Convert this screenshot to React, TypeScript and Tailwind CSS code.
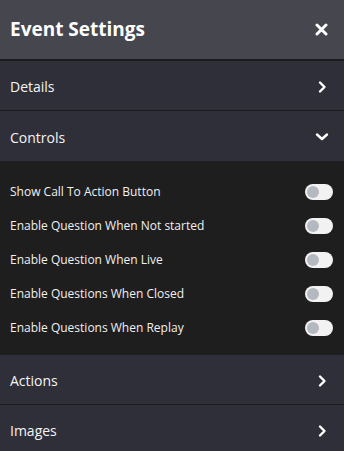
import React from "react";

const Chevron = ({ down = false }: { down?: boolean }) => (
  <svg width="14" height="14" viewBox="0 0 14 14" fill="none" stroke="#ffffff" strokeWidth="2.4" strokeLinecap="round" strokeLinejoin="round">
    {down ? <path d="M2 4.5l5 4.5 5-4.5" /> : <path d="M5 2.5l4.5 4.5L5 11.5" />}
  </svg>
);

const Toggle = () => (
  <div className="w-[28px] h-[16px] rounded-full bg-[#f2f2f2] flex items-center px-[2px]">
    <div className="w-[12px] h-[12px] rounded-full bg-[#b4b8c0]" />
  </div>
);

const Row = ({ label, open = false, border = true }: { label: string; open?: boolean; border?: boolean }) => (
  <div className={`h-[50px] shrink-0 bg-[#2f2f39] flex items-center justify-between pl-[10px] pr-[15px] pt-[2px] ${border ? "border-b border-[#1c1c20]" : ""}`}>
    <span className="text-[14px] text-[#f4f4f4]">{label}</span>
    <Chevron down={open} />
  </div>
);

const items = [
  "Show Call To Action Button",
  "Enable Question When Not started",
  "Enable Question When Live",
  "Enable Questions When Closed",
  "Enable Questions When Replay",
];

export default function App() {
  return (
    <div className="w-[344px] h-[451px] overflow-hidden bg-[#2f2f39] flex flex-col" style={{ fontFamily: '"Open Sans", "Noto Sans", sans-serif' }}>
      <div className="h-[61px] shrink-0 bg-[#46464e] flex items-center justify-between pl-[10px] pr-[16px] border-b-2 border-[#1c1c20]">
        <span className="text-[19px] font-bold text-white">Event Settings</span>
        <svg width="13" height="13" viewBox="0 0 13 13" stroke="#ffffff" strokeWidth="3" strokeLinecap="round">
          <path d="M2 2l9 9M11 2l-9 9" />
        </svg>
      </div>
      <Row label="Details" />
      <Row label="Controls" open border={false} />
      <div className="bg-[#1f1e1f] pt-[12px] pb-[12px] flex flex-col shrink-0">
        {items.map((t) => (
          <div key={t} className="h-[34px] flex items-center justify-between pl-[10px] pr-[11px] pt-[4px]">
            <span className="text-[12px] text-[#f0f0f0]">{t}</span>
            <Toggle />
          </div>
        ))}
      </div>
      <Row label="Actions" />
      <Row label="Images" />
    </div>
  );
}
